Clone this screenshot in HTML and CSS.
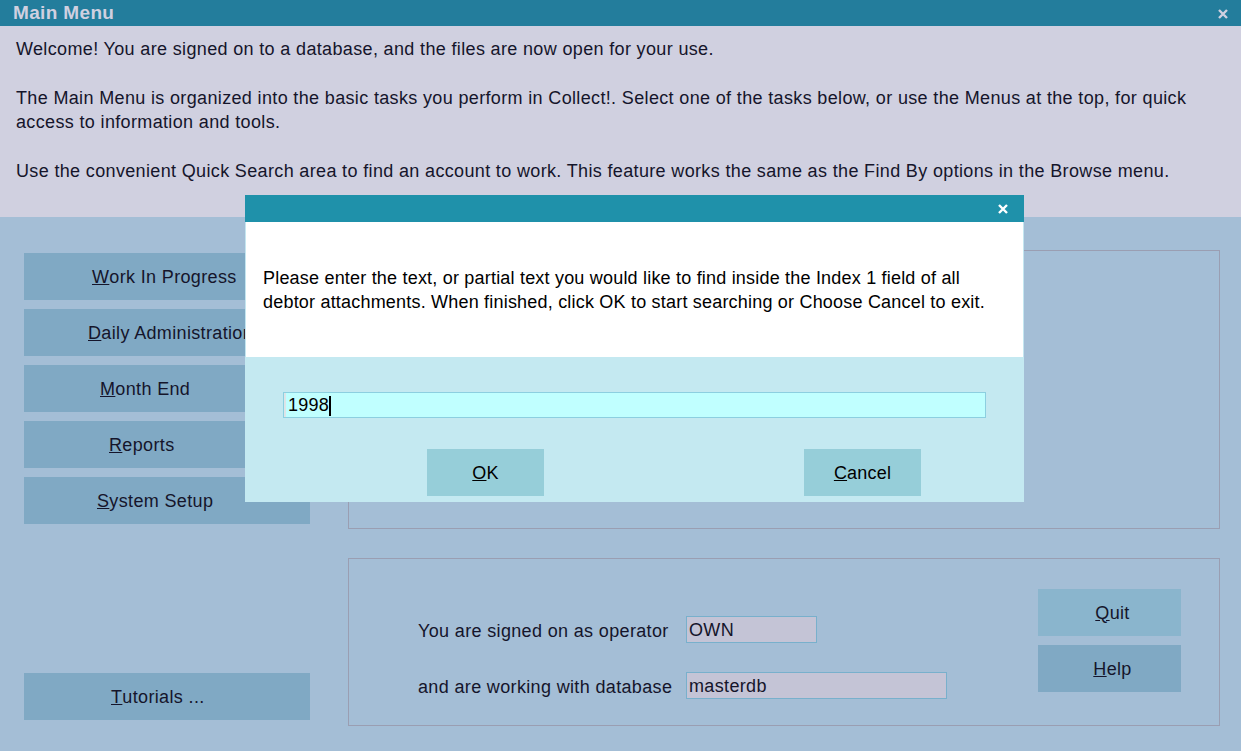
FILE: index.html
```html
<!DOCTYPE html>
<html>
<head>
<meta charset="utf-8">
<link rel="stylesheet" href="styles.css">
</head>
<body>
<div class="window">
  <div class="titlebar">
    <span class="title">Main Menu</span>
    <svg class="close" width="10" height="10" viewBox="0 0 10 10"><path d="M1 1L9 9M9 1L1 9" stroke="#d0d0e0" stroke-width="2.4"/></svg>
  </div>
  <div class="header">
    <p>Welcome! You are signed on to a database, and the files are now open for your use.</p>
    <p>The Main Menu is organized into the basic tasks you perform in Collect!. Select one of the tasks below, or use the Menus at the top, for quick access to information and tools.</p>
    <p>Use the convenient Quick Search area to find an account to work. This feature works the same as the Find By options in the Browse menu.</p>
  </div>
  <div class="main">
    <div class="leftcol">
      <div class="btn b-wip"><u>W</u>ork In Progress</div>
      <div class="btn b-daily"><u>D</u>aily Administration</div>
      <div class="btn b-month"><u>M</u>onth End</div>
      <div class="btn b-reports"><u>R</u>eports</div>
      <div class="btn b-setup"><u>S</u>ystem Setup</div>
      <div class="btn b-tut tutorials"><u>T</u>utorials ...</div>
    </div>
    <div class="rightcol">
      <div class="panel upper"></div>
      <div class="panel lower">
        <div class="info">
          <span class="label">You are signed on as operator</span>
          <span class="field short">OWN</span>
          <span class="label">and are working with database</span>
          <span class="field long">masterdb</span>
        </div>
        <div class="sidebtns">
          <div class="btn small quit"><u>Q</u>uit</div>
          <div class="btn small"><u>H</u>elp</div>
        </div>
      </div>
    </div>
  </div>

  <div class="dialog">
    <div class="dtitle">
      <svg class="dclose" width="10" height="10" viewBox="0 0 10 10"><path d="M1 1L9 9M9 1L1 9" stroke="#ffffff" stroke-width="2.4"/></svg>
    </div>
    <div class="dmsg">Please enter the text, or partial text you would like to find inside the Index 1 field of all debtor attachments. When finished, click OK to start searching or Choose Cancel to exit.</div>
    <div class="dbody">
      <div class="dinput">1998<span class="caret"></span></div>
      <div class="dbtns">
        <div class="dbtn ok"><u>O</u>K</div>
        <div class="dbtn cancel"><u>C</u>ancel</div>
      </div>
    </div>
  </div>
</div>
</body>
</html>
```

FILE: styles.css
```css
html, body {
  margin: 0;
  padding: 0;
}
body {
  font-family: "Liberation Sans", Arial, sans-serif;
  font-size: 18px;
  letter-spacing: 0.35px;
  color: #15152b;
  background: #a4bed6;
}
.window {
  position: relative;
  width: 1241px;
  height: 751px;
  overflow: hidden;
  background: #a4bed6;
}
.titlebar {
  height: 26px;
  background: #237d9c;
  display: flex;
  align-items: center;
  justify-content: space-between;
  padding: 0 13px 0 13px;
  box-sizing: border-box;
}
.title {
  color: #d0d0e0;
  font-weight: bold;
  font-size: 19px;
}
.close {
  margin-top: 1px;
}
.header {
  background: #d0d0e0;
  height: 191px;
  box-sizing: border-box;
  padding: 11px 16px 0 16px;
  line-height: 24px;
}
.header p {
  margin: 0 0 25px 0;
}
.main {
  height: 534px;
  display: flex;
  padding-left: 24px;
  box-sizing: border-box;
}
.leftcol {
  width: 286px;
  display: flex;
  flex-direction: column;
  gap: 9px;
  padding-top: 36px;
  padding-bottom: 31px;
  box-sizing: border-box;
}
.btn {
  height: 47px;
  padding-top: 1px;
  box-sizing: border-box;
  background: #80a9c4;
  display: flex;
  align-items: center;
  justify-content: center;
  white-space: nowrap;
  color: #15152b;
}
.leftcol .btn {
  justify-content: flex-start;
}
.b-wip { padding-left: 68px; }
.b-daily { padding-left: 64px; }
.b-month { padding-left: 76px; }
.b-reports { padding-left: 85px; }
.b-setup { padding-left: 73px; }
.b-tut { padding-left: 87px; }
.tutorials {
  margin-top: auto;
}
.rightcol {
  margin-left: 38px;
  width: 872px;
  padding-top: 33px;
  display: flex;
  flex-direction: column;
  gap: 29px;
}
.panel {
  border: 1px solid #9a9eb2;
  box-sizing: border-box;
}
.upper {
  height: 279px;
}
.lower {
  height: 168px;
  display: flex;
}
.info {
  margin-left: 69px;
  padding-top: 57px;
  display: grid;
  grid-template-columns: 268px auto;
  row-gap: 29px;
  align-content: start;
  align-items: center;
}
.label {
  color: #15152b;
  padding-top: 3px;
}
.field {
  height: 27px;
  box-sizing: border-box;
  background: #c4c4d6;
  border: 1px solid #78b0cc;
  padding-left: 2px;
  padding-top: 2px;
  display: flex;
  align-items: center;
}
.field.short { width: 131px; }
.field.long { width: 261px; }
.sidebtns {
  margin-left: auto;
  margin-right: 38px;
  padding-top: 30px;
  display: flex;
  flex-direction: column;
  gap: 9px;
}
.btn.small {
  width: 143px;
  padding-left: 6px;
}
.btn.quit {
  background: #8ab5cd;
}

/* dialog */
.dialog {
  position: absolute;
  left: 245px;
  top: 195px;
  width: 779px;
  height: 307px;
  background: #c4e9f1;
  display: flex;
  flex-direction: column;
  color: #000;
  letter-spacing: 0.2px;
}
.dtitle {
  height: 27px;
  background: #1f91aa;
  display: flex;
  align-items: center;
  justify-content: flex-end;
  padding-right: 16px;
}
.dmsg {
  height: 135px;
  background: #ffffff;
  border-left: 1px solid #c4e6f0;
  border-right: 1px solid #c4e6f0;
  box-sizing: border-box;
  padding: 44px 17px 0 17px;
  line-height: 24px;
}
.dbody {
  flex: 1;
  padding: 35px 38px 0 38px;
}
.dinput {
  width: 703px;
  height: 26px;
  box-sizing: border-box;
  background: #c0ffff;
  border: 1px solid #8ccfe0;
  box-shadow: inset 2px 0 0 #dde4e8;
  display: flex;
  align-items: center;
  padding-left: 4px;
  padding-top: 1px;
}
.caret {
  display: inline-block;
  width: 2px;
  height: 20px;
  background: #000;
}
.dbtns {
  display: flex;
  margin-top: 31px;
  padding-left: 144px;
  gap: 260px;
}
.dbtn {
  width: 117px;
  height: 47px;
  padding-top: 1px;
  box-sizing: border-box;
  background: #96ced9;
  display: flex;
  align-items: center;
  justify-content: center;
}
```
